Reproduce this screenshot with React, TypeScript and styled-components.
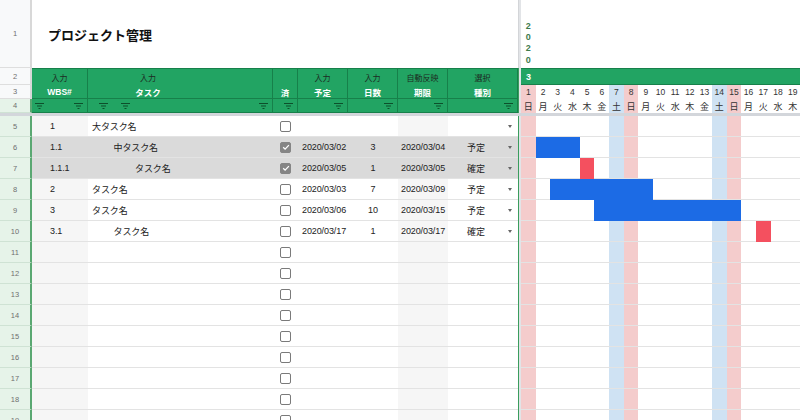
import styled, { createGlobalStyle } from "styled-components";

const GREEN = "#22a463";
const GREEN_LINE = "#17804a";
const GRID_LINE = "#e3e3e3";
const SHADE = "#dadada";
const SOFT = "#f6f6f6";
const SUN = "#f4cccc";
const SAT = "#cfe2f3";
const PLAN = "#1c6be5";
const FIXED = "#f4505f";

const WEEK = ["日", "月", "火", "水", "木", "金", "土"];
const DAYS = Array.from({ length: 19 }, (_, i) => i + 1);

type DayKind = "sun" | "sat" | undefined;

const dayKind = (d: number): DayKind => {
  const w = (d - 1) % 7;
  if (w === 0) return "sun";
  if (w === 6) return "sat";
  return undefined;
};

const kindBg = (k: DayKind) => (k === "sun" ? SUN : k === "sat" ? SAT : "#fff");

const pad = (n: number) => String(n).padStart(2, "0");
const dateLabel = (d: number) => `2020/03/${pad(d)}`;

const GlobalStyle = createGlobalStyle`
  *, *::before, *::after { box-sizing: border-box; }
  html, body { margin: 0; padding: 0; background: #fff; }
  body {
    font-family: "Liberation Sans", Arial, "Noto Sans CJK JP", sans-serif;
    overflow: hidden;
  }
`;

const COLS = "32px 56px 185px 25px 50px 50px 50px 70px 3px repeat(19, 1fr)";

const Sheet = styled.div`
  width: 800px;
  height: 420px;
  overflow: hidden;
  display: flex;
  flex-direction: column;
`;

const Row = styled.div<{ $h: number }>`
  display: grid;
  grid-template-columns: ${COLS};
  height: ${(p) => p.$h}px;
  flex: none;
`;

const RowNum = styled.div<{ $active?: boolean }>`
  display: flex;
  align-items: center;
  justify-content: center;
  font-size: 7.5px;
  color: #6f6f6f;
  background: ${(p) => (p.$active ? "#e6f3e9" : "#f8f9fa")};
  border-bottom: 1px solid ${(p) => (p.$active ? "#cfe2d4" : "#dedede")};
  border-right: 2px solid ${(p) => (p.$active ? "#5aa872" : "#d8d8d8")};
`;

const Title = styled.div`
  grid-column: span 7;
  display: flex;
  align-items: center;
  padding-left: 16px;
  font-size: 13px;
  font-weight: bold;
  color: #111;
`;

const Divider = styled.div<{ $top?: boolean }>`
  background: #e2e4e7;
  border-left: 1px solid ${(p) => (p.$top ? "#d3d5d8" : "#3a9d5d")};
`;

const YearCell = styled.div`
  display: flex;
  align-items: flex-end;
  justify-content: center;
  padding-bottom: 2px;
`;

const YearText = styled.div`
  width: 6px;
  word-break: break-all;
  text-align: center;
  font-size: 9px;
  font-weight: bold;
  line-height: 11.3px;
  color: #3d7a4c;
`;

const HeadBase = styled.div<{ $shift?: number }>`
  display: flex;
  align-items: center;
  justify-content: center;
  background: ${GREEN};
  border-right: 1px solid ${GREEN_LINE};
  padding-right: ${(p) => p.$shift ?? 0}px;
  font-size: 8px;
  white-space: nowrap;
`;

const HeadTop = styled(HeadBase)`
  border-top: 1px solid ${GREEN_LINE};
  color: #1d2b22;
  padding-top: 1px;
`;

const HeadLabel = styled(HeadBase)`
  border-bottom: 1px solid ${GREEN_LINE};
  color: #fff;
  font-weight: bold;
  font-size: 8.5px;
`;

const FilterCell = styled.div`
  display: flex;
  align-items: center;
  justify-content: flex-end;
  padding-right: 4px;
  background: ${GREEN};
  border-right: 1px solid ${GREEN_LINE};
  border-bottom: 1px solid ${GREEN_LINE};
`;

const LeadIcons = styled.div<{ $pad: number; $gap: number }>`
  display: flex;
  align-items: center;
  gap: ${(p) => p.$gap}px;
  margin-right: auto;
  padding-left: ${(p) => p.$pad}px;
`;

const MonthCell = styled.div`
  grid-column: span 19;
  display: flex;
  align-items: center;
  padding-left: 5px;
  background: ${GREEN};
  border-top: 1px solid ${GREEN_LINE};
  border-bottom: 1px solid ${GREEN_LINE};
  color: #fff;
  font-weight: bold;
  font-size: 9px;
`;

const DayHead = styled.div<{ $kind: DayKind; $small?: boolean }>`
  display: flex;
  align-items: center;
  justify-content: center;
  background: ${(p) => kindBg(p.$kind)};
  font-size: ${(p) => (p.$small ? 8.5 : 9)}px;
  color: #333;
  white-space: nowrap;
`;

const FrozenBar = styled.div`
  height: 3px;
  flex: none;
  background: #d3d6db;
`;

const DataCell = styled.div<{ $shade?: boolean }>`
  display: flex;
  align-items: center;
  min-width: 0;
  white-space: nowrap;
  font-size: 9px;
  letter-spacing: -0.1px;
  color: #222;
  background: ${(p) => (p.$shade ? SHADE : "#fff")};
  border-bottom: 1px solid ${GRID_LINE};
`;

const WbsCell = styled(DataCell)`
  padding-left: 18px;
  background: ${(p) => (p.$shade ? SHADE : SOFT)};
`;

const TaskCell = styled(DataCell)<{ $level: number }>`
  padding-left: ${(p) => 4 + p.$level * 21.5}px;
`;

const CheckCell = styled(DataCell)`
  justify-content: center;
`;

const Check = styled.span<{ $on?: boolean }>`
  width: 11px;
  height: 11px;
  border-radius: 2px;
  border: 1.5px solid ${(p) => (p.$on ? "#858585" : "#7a7a7a")};
  background: ${(p) => (p.$on ? "#858585" : "#fff")};
  display: flex;
  align-items: center;
  justify-content: center;
`;

const DateCell = styled(DataCell)`
  padding-left: 4px;
`;

const NumCell = styled(DataCell)`
  justify-content: center;
`;

const DueCell = styled(DataCell)`
  padding-left: 3px;
  background: ${(p) => (p.$shade ? SHADE : SOFT)};
`;

const KindCell = styled(DataCell)`
  display: grid;
  grid-template-columns: 1fr 14px;
  align-items: center;
  justify-items: center;
`;

const Caret = styled.span`
  width: 0;
  height: 0;
  margin-right: 2px;
  margin-top: 1px;
  border-left: 2.5px solid transparent;
  border-right: 2.5px solid transparent;
  border-top: 3px solid #666;
`;

const GanttCell = styled.div<{ $kind: DayKind; $fill?: string }>`
  background: ${(p) => p.$fill ?? kindBg(p.$kind)};
  border-bottom: 1px solid ${(p) => p.$fill ?? GRID_LINE};
`;

const FilterIcon = () => (
  <svg width="9" height="6" viewBox="0 0 9 6" fill="none" stroke="#0d4f2b" strokeWidth="1">
    <path d="M0 0.5h9M2 3h5M3.5 5.5h2" />
  </svg>
);

const CheckMark = () => (
  <svg width="8" height="8" viewBox="0 0 8 8" fill="none" stroke="#fff" strokeWidth="1.3">
    <path d="M1.2 4.2l1.9 1.9 3.8-4" />
  </svg>
);

const columns = [
  { key: "wbs", top: "入力", label: "WBS#", lead: 1, leadPad: 2.5, leadGap: 0, shift: 0 },
  { key: "task", top: "入力", label: "タスク", lead: 2, leadPad: 10.5, leadGap: 13.5, shift: 64 },
  { key: "done", top: "", label: "済", lead: 0, leadPad: 0, leadGap: 0, shift: 0 },
  { key: "plan", top: "入力", label: "予定", lead: 0, leadPad: 0, leadGap: 0, shift: 0 },
  { key: "days", top: "入力", label: "日数", lead: 0, leadPad: 0, leadGap: 0, shift: 0 },
  { key: "due", top: "自動反映", label: "期限", lead: 0, leadPad: 0, leadGap: 0, shift: 0 },
  { key: "kind", top: "選択", label: "種別", lead: 0, leadPad: 0, leadGap: 0, shift: 0 },
];

type Task = {
  wbs: string;
  name: string;
  level: number;
  done: boolean;
  start?: number;
  days?: number;
  kind?: "予定" | "確定";
};

const tasks: Task[] = [
  { wbs: "1", name: "大タスク名", level: 0, done: false },
  { wbs: "1.1", name: "中タスク名", level: 1, done: true, start: 2, days: 3, kind: "予定" },
  { wbs: "1.1.1", name: "タスク名", level: 2, done: true, start: 5, days: 1, kind: "確定" },
  { wbs: "2", name: "タスク名", level: 0, done: false, start: 3, days: 7, kind: "予定" },
  { wbs: "3", name: "タスク名", level: 0, done: false, start: 6, days: 10, kind: "予定" },
  { wbs: "3.1", name: "タスク名", level: 1, done: false, start: 17, days: 1, kind: "確定" },
];

const EMPTY_ROWS = 9;

export default function App() {
  return (
    <>
      <GlobalStyle />
      <Sheet>
        <Row $h={68}>
          <RowNum>1</RowNum>
          <Title>プロジェクト管理</Title>
          <Divider $top />
          <YearCell>
            <YearText>2020</YearText>
          </YearCell>
        </Row>

        <Row $h={17}>
          <RowNum>2</RowNum>
          {columns.map((c) => (
            <HeadTop key={c.key} $shift={c.shift}>
              {c.top}
            </HeadTop>
          ))}
          <Divider />
          <MonthCell>3</MonthCell>
        </Row>

        <Row $h={14}>
          <RowNum>3</RowNum>
          {columns.map((c) => (
            <HeadLabel key={c.key} $shift={c.shift}>
              {c.label}
            </HeadLabel>
          ))}
          <Divider />
          {DAYS.map((d) => (
            <DayHead key={d} $kind={dayKind(d)} $small>
              {d}
            </DayHead>
          ))}
        </Row>

        <Row $h={14}>
          <RowNum $active>4</RowNum>
          {columns.map((c) => (
            <FilterCell key={c.key}>
              {c.lead > 0 && (
                <LeadIcons $pad={c.leadPad} $gap={c.leadGap}>
                  {Array.from({ length: c.lead }, (_, i) => (
                    <FilterIcon key={i} />
                  ))}
                </LeadIcons>
              )}
              <FilterIcon />
            </FilterCell>
          ))}
          <Divider />
          {DAYS.map((d) => (
            <DayHead key={d} $kind={dayKind(d)}>
              {WEEK[(d - 1) % 7]}
            </DayHead>
          ))}
        </Row>

        <FrozenBar />

        {tasks.map((t, i) => {
          const end = t.start && t.days ? t.start + t.days - 1 : undefined;
          const color = t.kind === "確定" ? FIXED : PLAN;
          return (
            <Row $h={21} key={i}>
              <RowNum $active>{i + 5}</RowNum>
              <WbsCell $shade={t.done}>{t.wbs}</WbsCell>
              <TaskCell $shade={t.done} $level={t.level}>
                {t.name}
              </TaskCell>
              <CheckCell $shade={t.done}>
                <Check $on={t.done}>{t.done && <CheckMark />}</Check>
              </CheckCell>
              <DateCell $shade={t.done}>{t.start ? dateLabel(t.start) : ""}</DateCell>
              <NumCell $shade={t.done}>{t.days ?? ""}</NumCell>
              <DueCell $shade={t.done}>{end ? dateLabel(end) : ""}</DueCell>
              <KindCell $shade={t.done}>
                <span>{t.kind ?? ""}</span>
                <Caret />
              </KindCell>
              <Divider />
              {DAYS.map((d) => (
                <GanttCell
                  key={d}
                  $kind={dayKind(d)}
                  $fill={t.start && end && d >= t.start && d <= end ? color : undefined}
                />
              ))}
            </Row>
          );
        })}

        {Array.from({ length: EMPTY_ROWS }, (_, i) => (
          <Row $h={21} key={`e${i}`}>
            <RowNum $active>{i + 11}</RowNum>
            <WbsCell />
            <TaskCell $level={0} />
            <CheckCell>
              <Check />
            </CheckCell>
            <DateCell />
            <NumCell />
            <DueCell />
            <KindCell />
            <Divider />
            {DAYS.map((d) => (
              <GanttCell key={d} $kind={dayKind(d)} />
            ))}
          </Row>
        ))}
      </Sheet>
    </>
  );
}
